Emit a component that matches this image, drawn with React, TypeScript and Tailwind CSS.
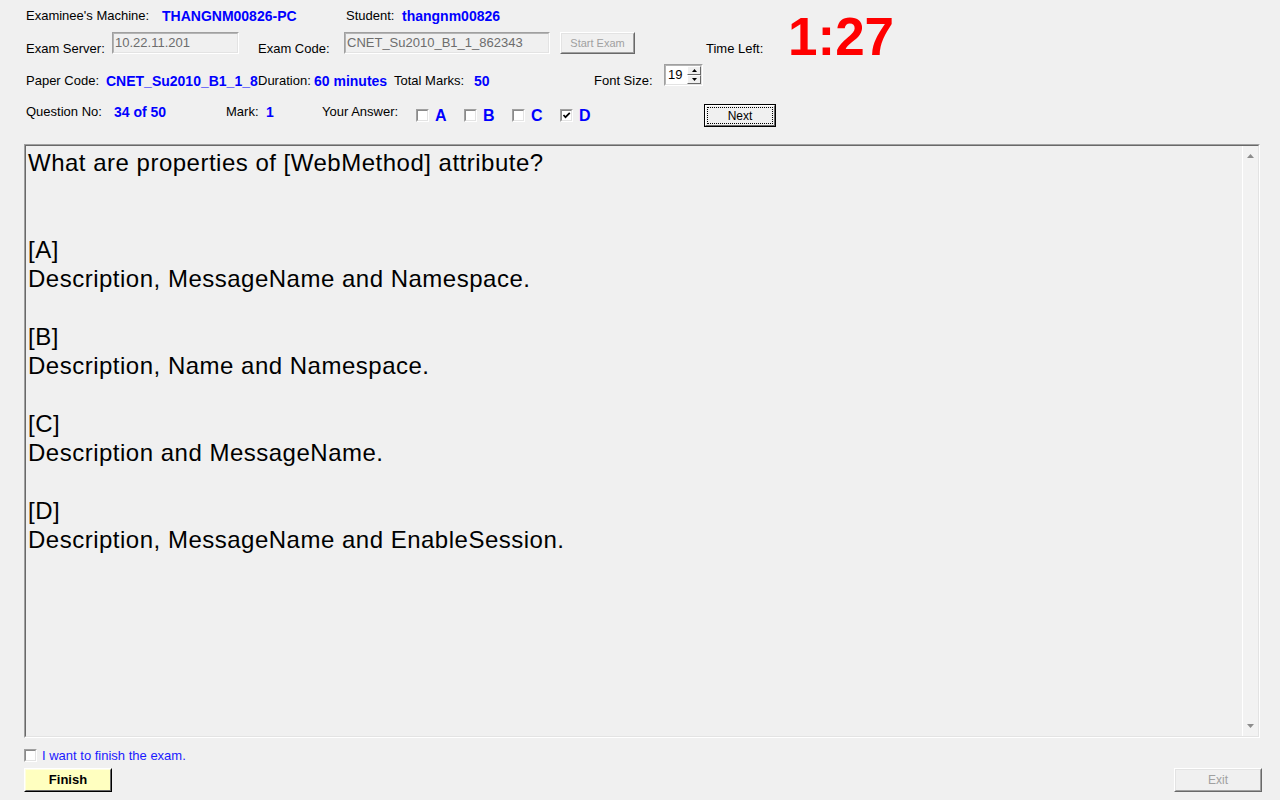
import React from "react";

const lines = [
  "What are properties of [WebMethod] attribute?",
  "",
  "",
  "[A]",
  "Description, MessageName and Namespace.",
  "",
  "[B]",
  "Description, Name and Namespace.",
  "",
  "[C]",
  "Description and MessageName.",
  "",
  "[D]",
  "Description, MessageName and EnableSession.",
];

function TextBox({ value, width }: { value: string; width: string }) {
  return (
    <div className={`${width} h-[22px] border border-t-[#a0a0a0] border-l-[#a0a0a0] border-b-white border-r-white`}>
      <div className="h-full border border-t-[#b4b4b4] border-l-[#b4b4b4] border-b-[#e3e3e3] border-r-[#e3e3e3] bg-[#f0f0f0] pl-[1px] text-[13px] leading-[17px] text-[#6d6d6d] whitespace-nowrap overflow-hidden">
        {value}
      </div>
    </div>
  );
}

function Raised({ className, children }: { className: string; children: React.ReactNode }) {
  return (
    <div className={`border border-t-white border-l-white border-b-[#696969] border-r-[#696969] ${className}`}>
      <div className="h-full border border-t-[#e3e3e3] border-l-[#e3e3e3] border-b-[#a0a0a0] border-r-[#a0a0a0] flex items-center justify-center">
        {children}
      </div>
    </div>
  );
}

function CheckBox({ checked = false }: { checked?: boolean }) {
  return (
    <div className="w-[13px] h-[13px] border border-t-[#a0a0a0] border-l-[#a0a0a0] border-b-white border-r-white">
      <div className="w-full h-full border border-t-[#8a8a8a] border-l-[#8a8a8a] border-b-[#e3e3e3] border-r-[#e3e3e3] bg-white flex items-center justify-center">
        {checked && (
          <svg width="9" height="9" viewBox="0 0 9 9">
            <polyline points="1.5,4 3.5,6.2 7.8,1.8" fill="none" stroke="#000" strokeWidth="1.7" />
          </svg>
        )}
      </div>
    </div>
  );
}

function Answer({ letter, checked }: { letter: string; checked?: boolean }) {
  return (
    <div className="w-[48px] flex items-start">
      <div className="mt-[5px]">
        <CheckBox checked={checked} />
      </div>
      <span className="ml-[6px] mt-[4px] text-[16px] leading-[16px] font-bold text-[#0000ff]">{letter}</span>
    </div>
  );
}

export default function App() {
  return (
    <div className="w-[1280px] h-[800px] overflow-hidden bg-[#f0f0f0] text-black font-['Liberation_Sans',Arial,sans-serif] text-[13px] leading-[16px]">
      {/* row 1 */}
      <div className="mt-[8px] h-[16px] flex items-center pl-[26px]">
        <span className="w-[136px]">Examinee's Machine:</span>
        <span className="w-[184px] text-[14px] font-bold text-[#0000ff]">THANGNM00826-PC</span>
        <span className="w-[56px]">Student:</span>
        <span className="text-[14px] font-bold text-[#0000ff]">thangnm00826</span>
      </div>

      {/* row 2 */}
      <div className="mt-[8px] h-[22px] flex items-start pl-[26px]">
        <span className="w-[86px] mt-[9px]">Exam Server:</span>
        <TextBox value="10.22.11.201" width="w-[127px]" />
        <span className="ml-[19px] w-[86px] mt-[9px]">Exam Code:</span>
        <TextBox value="CNET_Su2010_B1_1_862343" width="w-[206px]" />
        <Raised className="ml-[10px] w-[75px] h-[22px]">
          <span className="text-[11px] text-[#a0a0a0]">Start Exam</span>
        </Raised>
        <span className="ml-[71px] w-[82px] mt-[9px]">Time Left:</span>
        <span className="-mt-[22px] text-[53px] leading-[53px] font-bold text-[#ff0000]">1:27</span>
      </div>

      {/* row 3 */}
      <div className="mt-[10px] h-[22px] flex items-start pl-[26px]">
        <span className="w-[80px] mt-[9px]">Paper Code:</span>
        <span className="w-[152px] mt-[9px] text-[14px] font-bold text-[#0000ff] whitespace-nowrap overflow-hidden">
          CNET_Su2010_B1_1_862343
        </span>
        <span className="w-[56px] mt-[9px]">Duration:</span>
        <span className="w-[80px] mt-[9px] text-[14px] font-bold text-[#0000ff]">60 minutes</span>
        <span className="w-[80px] mt-[9px]">Total Marks:</span>
        <span className="w-[120px] mt-[9px] text-[14px] font-bold text-[#0000ff]">50</span>
        <span className="w-[70px] mt-[9px]">Font Size:</span>
        <div className="w-[39px] h-[22px] border border-t-[#a0a0a0] border-l-[#a0a0a0] border-b-white border-r-white">
          <div className="h-full bg-white flex border border-t-[#b4b4b4] border-l-[#b4b4b4] border-b-[#e3e3e3] border-r-[#e3e3e3]">
            <span className="flex-1 pl-[2px] text-[13px] leading-[18px]">19</span>
            <div className="w-[14px] flex flex-col">
              <div className="h-[10px] bg-[#f0f0f0] border border-t-white border-l-white border-b-[#696969] border-r-[#696969] flex items-center justify-center">
                <svg width="5" height="3" viewBox="0 0 5 3"><polygon points="2.5,0 5,3 0,3" fill="#000" /></svg>
              </div>
              <div className="h-[10px] bg-[#f0f0f0] border border-t-white border-l-white border-b-[#696969] border-r-[#696969] flex items-center justify-center">
                <svg width="5" height="3" viewBox="0 0 5 3"><polygon points="0,0 5,0 2.5,3" fill="#000" /></svg>
              </div>
            </div>
          </div>
        </div>
      </div>

      {/* row 4 */}
      <div className="mt-[18px] h-[23px] flex items-start pl-[26px]">
        <span className="w-[88px]">Question No:</span>
        <span className="w-[112px] text-[14px] font-bold text-[#0000ff]">34 of 50</span>
        <span className="w-[40px]">Mark:</span>
        <span className="w-[56px] text-[14px] font-bold text-[#0000ff]">1</span>
        <span className="w-[94px]">Your Answer:</span>
        <Answer letter="A" />
        <Answer letter="B" />
        <Answer letter="C" />
        <Answer letter="D" checked />
        <div className="ml-[96px] w-[72px] h-[23px] border border-black">
          <div className="h-full border border-t-white border-l-white border-b-[#696969] border-r-[#696969] p-[1px]">
            <div className="h-full border border-dotted border-black flex items-center justify-center text-[12px] leading-[12px]">
              Next
            </div>
          </div>
        </div>
      </div>

      {/* question */}
      <div className="mt-[17px] ml-[24px] w-[1236px] h-[594px] border border-t-[#a0a0a0] border-l-[#a0a0a0] border-b-white border-r-white">
        <div className="h-full flex border border-t-[#696969] border-l-[#696969] border-b-[#e3e3e3] border-r-[#e3e3e3]">
          <div className="flex-1 pl-[2px] pt-[2px] text-[24px] leading-[29px] tracking-[0.5px]">
            {lines.map((l, i) => (
              <div key={i} className="h-[29px] whitespace-nowrap">{l}</div>
            ))}
          </div>
          <div className="w-[16px] bg-[#f2f2f2] border-l border-l-white flex flex-col justify-between items-center py-[8px]">
            <svg width="7" height="4" viewBox="0 0 7 4"><polygon points="3.5,0 7,4 0,4" fill="#8c8c8c" /></svg>
            <svg width="7" height="4" viewBox="0 0 7 4"><polygon points="0,0 7,0 3.5,4" fill="#8c8c8c" /></svg>
          </div>
        </div>
      </div>

      {/* footer */}
      <div className="mt-[10px] pl-[24px] h-[16px] flex items-start">
        <div className="mt-[1px]">
          <CheckBox />
        </div>
        <span className="ml-[5px] text-[#1a1aff]">I want to finish the exam.</span>
      </div>
      <div className="mt-[4px] pl-[24px] pr-[18px] flex justify-between">
        <div className="w-[88px] h-[24px] border border-t-white border-l-white border-b-black border-r-black">
          <div className="h-full bg-[#ffffc0] border border-t-[#ffffe0] border-l-[#ffffe0] border-b-[#696969] border-r-[#696969] flex items-center justify-center text-[13px] font-bold">
            Finish
          </div>
        </div>
        <Raised className="w-[88px] h-[24px]">
          <span className="text-[12px] text-[#a0a0a0]">Exit</span>
        </Raised>
      </div>
    </div>
  );
}
